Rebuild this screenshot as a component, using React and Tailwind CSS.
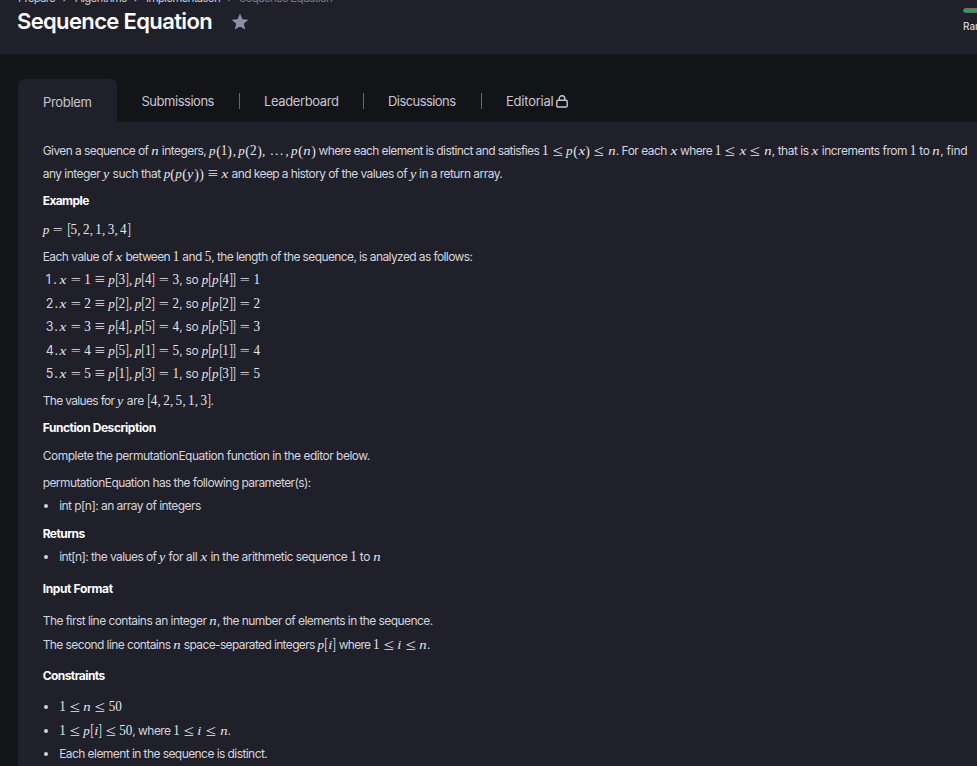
import { useLayoutEffect, useRef } from "react";

// Text run whose tracking is adjusted so that it fills `w` pixels.
function Run({ w, children, className = "" }) {
  const ref = useRef(null);
  useLayoutEffect(() => {
    const el = ref.current;
    el.style.letterSpacing = "0px";
    const natural = el.getBoundingClientRect().width;
    el.style.letterSpacing = (w - natural) / children.length + "px";
  }, [w, children]);
  return (
    <span ref={ref} className={"inline-block shrink-0 whitespace-pre " + className}>
      {children}
    </span>
  );
}

// Advance widths (em), horizontal and vertical stretch of the math glyphs.
const GLYPHS = {
  x: [0.572, 1.15, 1, true],
  n: [0.6, 1.12, 1, true],
  p: [0.503, 1, 1, true],
  y: [0.49, 1.08, 1, true],
  i: [0.345, 1.1, 1, true],
  "(": [0.389, 1.05, 1.15],
  ")": [0.389, 1.05, 1.15],
  "[": [0.278, 0.75, 1.25],
  "]": [0.278, 0.75, 1.25],
  "≤": [1.334, 1.4, 1.2],
  "≡": [1.334, 1.4, 1.3],
  "=": [1.334, 1.35, 1],
  "…": [1.339, 1.1, 1],
};

function MathText({ children }) {
  return (
    <span className="inline-flex shrink-0 items-baseline font-['Liberation_Serif',serif] text-[13.15px] text-[#e6e6ea]">
      {[...children].map((c, k) => {
        if (c === ",")
          return (
            <span key={k} className="inline-block w-[0.445em] pl-[0.02em]">
              ,
            </span>
          );
        const [w, sx, sy, it] = GLYPHS[c] || [0.5, 1, 1.05];
        return (
          <span
            key={k}
            className={"inline-block text-center " + (it ? "italic" : "")}
            style={{ width: w + "em", transform: `scale(${sx}, ${sy})` }}
          >
            {c}
          </span>
        );
      })}
    </span>
  );
}

// Items: a string is math, a [text, width] pair is prose.
function Row({ items, className = "" }) {
  return (
    <div className={"flex h-5 items-baseline " + className}>
      {items.map((it, k) =>
        typeof it === "string" ? (
          <MathText key={k}>{it}</MathText>
        ) : (
          <Run key={k} w={it[1]}>
            {it[0]}
          </Run>
        )
      )}
    </div>
  );
}

function Heading({ w, children, className = "" }) {
  return (
    <h4 className={"h-5 font-bold text-white " + className}>
      <Run w={w}>{children}</Run>
    </h4>
  );
}

function Bullet({ items, className = "" }) {
  return (
    <li className={"flex h-5 items-center " + className}>
      <span className="mr-[11.5px] ml-px size-1 shrink-0 rounded-full bg-[#d3d4de]" />
      <Row items={items} />
    </li>
  );
}

const STEPS = [
  ["1.", "x=1≡p[3],p[4]=3", "p[p[4]]=1", "mt-[3.8px]"],
  ["2.", "x=2≡p[2],p[2]=2", "p[p[2]]=2", "mt-[3.4px]"],
  ["3.", "x=3≡p[4],p[5]=4", "p[p[5]]=3", "mt-[3.4px]"],
  ["4.", "x=4≡p[5],p[1]=5", "p[p[1]]=4", "mt-[3.4px]"],
  ["5.", "x=5≡p[1],p[3]=1", "p[p[3]]=5", "mt-[3.4px]"],
];

const Divider = ({ className }) => <span className={"h-4 w-px shrink-0 bg-[#64656f] " + className} />;

export default function App() {
  return (
    <div className="flex h-[766px] w-[977px] flex-col overflow-hidden bg-[#131418] font-['Inter',sans-serif] text-[#d3d4de]">
      <header className="flex h-[54px] shrink-0 justify-between bg-[#20202a]">
        <div className="-mt-[10px] pl-[17px]">
          <nav className="flex h-4 items-center pl-px text-[11.5px] leading-4 text-[#c8c9d6]">
            <Run w={37}>Prepare</Run>
            <Run w={20} className="text-center">{"  ›  "}</Run>
            <Run w={51.5}>Algorithms</Run>
            <Run w={19.5}>{"  ›  "}</Run>
            <Run w={74}>Implementation</Run>
            <Run w={19} className="text-[#777885]">{"  ›  "}</Run>
            <Run w={93} className="text-[#777885]">Sequence Equation</Run>
          </nav>
          <div className="flex items-center">
            <h1 className="text-[22px] leading-[30px] font-semibold text-white">
              <Run w={195}>Sequence Equation</Run>
            </h1>
            <svg viewBox="0 0 18 17" className="ml-[19px] h-[17px] w-[18px] fill-[#8f8fac]">
              <path d="M9 .6l2.4 5.6 6 .5-4.6 4 1.4 5.9L9 13.4l-5.2 3.2 1.4-5.9-4.6-4 6-.5z" />
            </svg>
          </div>
        </div>
        <div className="w-[14px] overflow-hidden pt-2">
          <div className="h-[5px] w-10 rounded-full border border-[#6a6b72] bg-[#1ba94c]" />
          <div className="mt-[5px] text-[10px] leading-4 font-medium whitespace-nowrap">Rank</div>
        </div>
      </header>

      <div className="mt-[25px] flex h-[43px] shrink-0 items-center pl-[18px] text-[13px] leading-5 text-[#c5c6d3]">
        <div className="flex h-full w-[99px] items-center rounded-t-md bg-[#20202a] pt-[2px] pl-[25px]">
          <Run w={48.5}>Problem</Run>
        </div>
        <div className="flex items-center pt-px">
          <Run w={72.5} className="ml-[24.5px]">Submissions</Run>
          <Divider className="ml-[25px]" />
          <Run w={74.5} className="ml-6">Leaderboard</Run>
          <Divider className="ml-[24.5px]" />
          <Run w={67.5} className="ml-6">Discussions</Run>
          <Divider className="ml-[25.5px]" />
          <Run w={47.5} className="ml-6">Editorial</Run>
          <svg viewBox="0 0 12 13" className="ml-[2.5px] h-[13px] w-3 fill-none stroke-[#c5c6d3] stroke-[1.4]">
            <rect x=".8" y="5.2" width="10.4" height="6.8" rx="1.2" />
            <path d="M3.2 5.2V3.6a2.8 2.8 0 0 1 5.6 0v1.6" />
          </svg>
        </div>
      </div>

      <main className="ml-[18px] grow bg-[#20202a] pt-[19.4px] pl-[24.7px] text-[12px] leading-5">
        <Row
          items={[
            ["Given a sequence of ", 108.5], "n", [" integers, ", 50], "p(1),p(2),…,p(n)",
            [" where each element is distinct and satisfies ", 226.3], "1≤p(x)≤n",
            [". For each ", 54], "x", [" where ", 37.5], "1≤x≤n", [", that is ", 39.5], "x",
            [" increments from ", 91], "1", [" to ", 16], "n", [", find", 27],
          ]}
        />
        <Row
          className="mt-[2.9px]"
          items={[
            ["any integer ", 60.5], "y", [" such that ", 54], "p(p(y))≡x",
            [" and keep a history of the values of ", 181], "y", [" in a return array.", 86],
          ]}
        />
        <Heading w={46} className="mt-[6.5px]">Example</Heading>
        <Row className="mt-[9.3px]" items={["p=[5,2,1,3,4]"]} />
        <Row
          className="mt-[6.6px]"
          items={[
            ["Each value of ", 72.5], "x", [" between ", 50], "1", [" and ", 25.5], "5",
            [", the length of the sequence, is analyzed as follows:", 261],
          ]}
        />
        <ol>
          {STEPS.map(([num, a, b, gap]) => (
            <li key={num} className={"flex h-5 items-baseline pl-[3px] " + gap}>
              <span className="text-[12.5px]">
                <Run w={13.5}>{num}</Run>
              </span>
              <Row items={[a, [", so ", 22.5], b]} />
            </li>
          ))}
        </ol>
        <Row className="mt-[7.2px]" items={[["The values for ", 74.5], "y", [" are ", 23.5], "[4,2,5,1,3]", [".", 3]]} />
        <Heading w={113} className="mt-[7px]">Function Description</Heading>
        <Row className="mt-2" items={[["Complete the permutationEquation function in the editor below.", 327]]} />
        <Row className="mt-[7px]" items={[["permutationEquation has the following parameter(s):", 268]]} />
        <ul>
          <Bullet className="mt-[3px]" items={[["int p[n]: an array of integers", 141.5]]} />
        </ul>
        <Heading w={42} className="mt-2">Returns</Heading>
        <ul>
          <Bullet
            className="mt-[3px]"
            items={[
              ["int[n]: the values of ", 100], "y", [" for all ", 34.5], "x",
              [" in the arithmetic sequence ", 142.5], "1", [" to ", 16.5], "n",
            ]}
          />
        </ul>
        <Heading w={70} className="mt-3">Input Format</Heading>
        <Row className="mt-3" items={[["The first line contains an integer ", 166.5], "n", [", the number of elements in the sequence.", 215.5]]} />
        <Row
          className="mt-[3.4px]"
          items={[
            ["The second line contains ", 130.5], "n", [" space-separated integers ", 136.5], "p[i]",
            [" where ", 37], "1≤i≤n", [".", 3],
          ]}
        />
        <Heading w={62} className="mt-[11.6px]">Constraints</Heading>
        <ul>
          <Bullet className="mt-[11.2px]" items={["1≤n≤50"]} />
          <Bullet className="mt-[3.4px]" items={["1≤p[i]≤50", [", where ", 41], "1≤i≤n", [".", 3]]} />
          <Bullet className="mt-[3px]" items={[["Each element in the sequence is distinct.", 208]]} />
        </ul>
      </main>
    </div>
  );
}
